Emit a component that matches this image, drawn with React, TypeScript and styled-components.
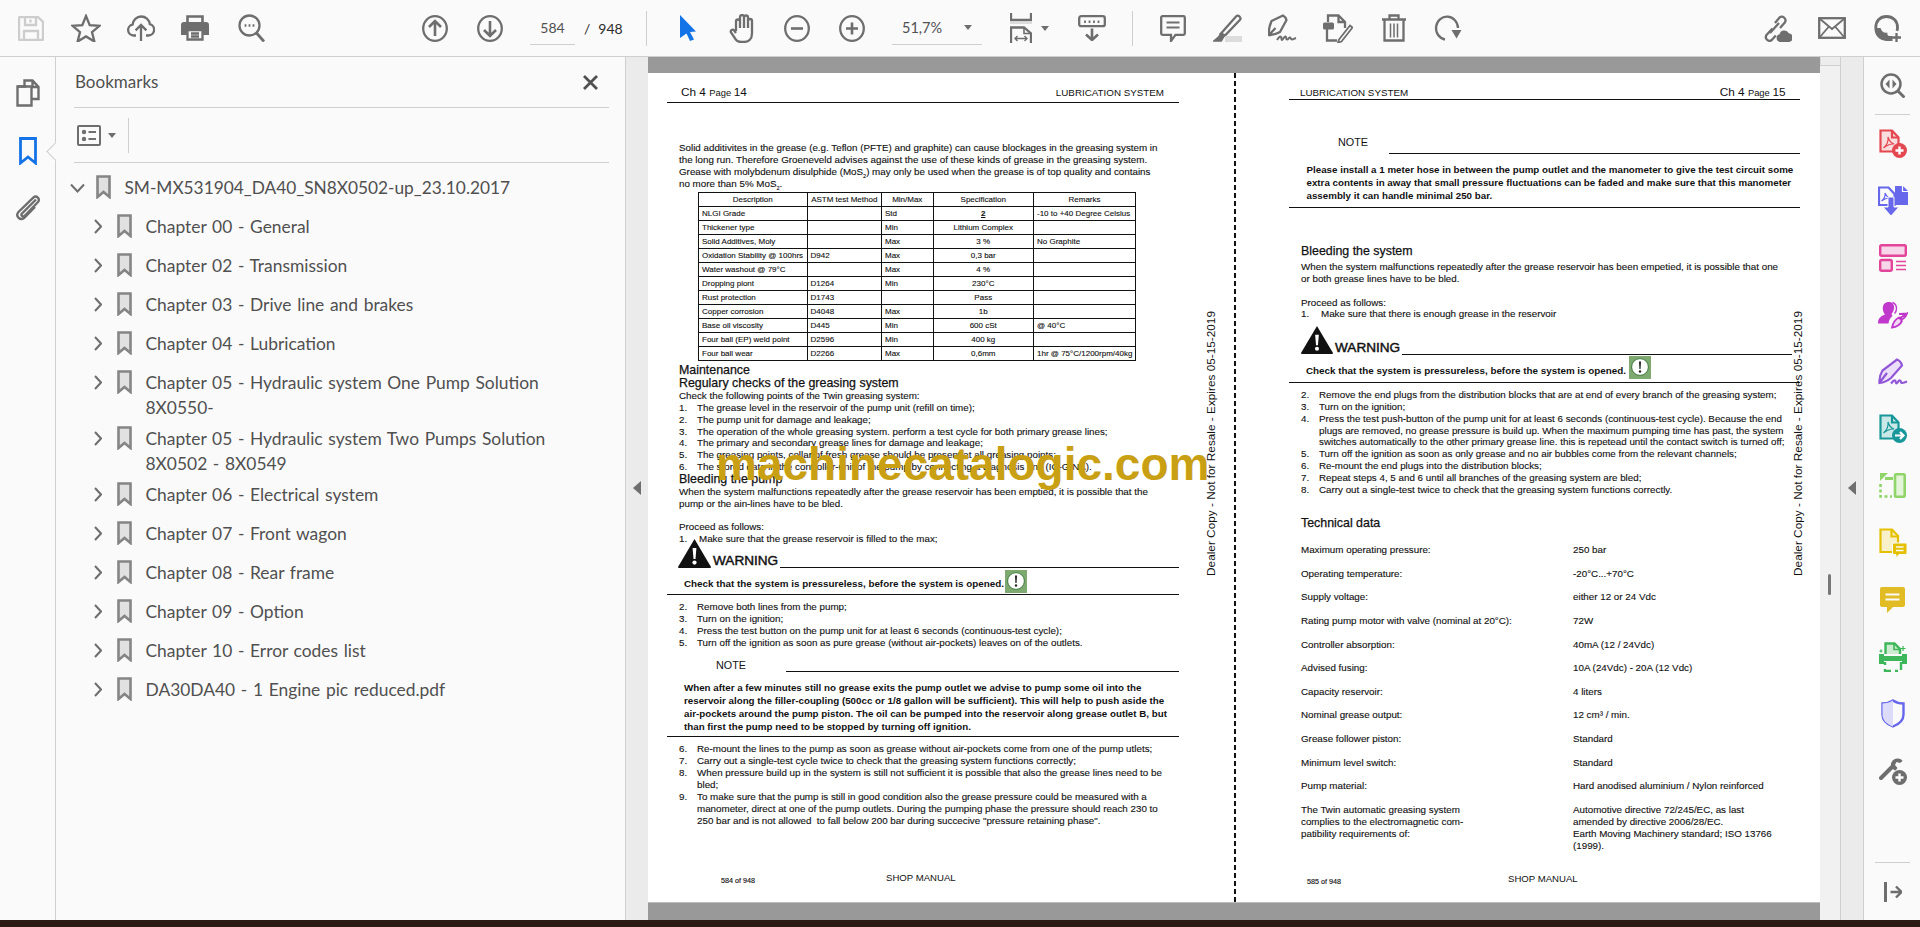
import * as React from "react"
import styled, { createGlobalStyle } from "styled-components"

const GlobalStyle = createGlobalStyle`
  html, body {
    margin: 0;
    padding: 0;
    height: 100%;
    overflow: hidden;
    background: #2b1a14;
  }
`

const ui = `Lato, "Open Sans", sans-serif`
const doc = `"Liberation Sans", Arial, sans-serif`

const Shell = styled.div`
  width: 1920px;
  height: 927px;
  display: flex;
  flex-direction: column;
  font-family: ${ui};
`

const Toolbar = styled.header`
  height: 56px;
  flex: none;
  display: flex;
  align-items: center;
  background: #fafafa;
  border-bottom: 1px solid #cfcfcf;
  padding-right: 18px;
`

const ToolIcon = styled.svg<{ $ml: number }>`
  flex: none;
  margin-left: ${(p) => p.$ml}px;
  fill: none;
  stroke: #6e6e6e;
  stroke-width: 2.3;
`

const ToolDivider = styled.div<{ $ml: number }>`
  flex: none;
  width: 1px;
  height: 35px;
  margin-left: ${(p) => p.$ml}px;
  background: #cfcfcf;
`

const PageInput = styled.div`
  flex: none;
  width: 45px;
  height: 34px;
  margin-left: 27px;
  display: flex;
  align-items: center;
  justify-content: center;
  border-bottom: 1px solid #cfcfcf;
  box-sizing: border-box;
  font-size: 14px;
  color: #505050;
`

const PageTotal = styled.div`
  flex: none;
  width: 36px;
  margin-left: 9px;
  display: flex;
  gap: 8px;
  font-size: 14px;
  color: #2c2c2c;
`

const ZoomSelect = styled.div`
  flex: none;
  width: 90px;
  height: 34px;
  margin-left: 27px;
  padding: 0 10px;
  display: flex;
  align-items: center;
  justify-content: space-between;
  border-bottom: 1px solid #cfcfcf;
  box-sizing: border-box;
  font-size: 14.5px;
  color: #505050;
`

const Caret = styled.span<{ $ml?: number }>`
  flex: none;
  margin-left: ${(p) => p.$ml ?? 0}px;
  width: 0;
  height: 0;
  border-left: 4px solid transparent;
  border-right: 4px solid transparent;
  border-top: 5px solid #6e6e6e;
`

const Spacer = styled.div`
  flex: 1;
`

const Workspace = styled.div`
  flex: 1;
  min-height: 0;
  display: flex;
`

const Desktop = styled.div`
  height: 7px;
  flex: none;
  background: #2b1a14;
`

const LeftRail = styled.nav`
  position: relative;
  flex: none;
  width: 55px;
  padding-top: 22px;
  box-sizing: content-box;
  display: flex;
  flex-direction: column;
  align-items: center;
  background: #fafafa;
  border-right: 1px solid #cfcfcf;
`

const RailPointer = styled.span`
  position: absolute;
  left: 49px;
  top: 88px;
  width: 12px;
  height: 12px;
  background: #fafafa;
  border-left: 1px solid #cfcfcf;
  border-bottom: 1px solid #cfcfcf;
  transform: rotate(45deg);
`

const LeftRailIcon = styled.svg<{ $mt?: number; $blue?: boolean }>`
  flex: none;
  margin-top: ${(p) => p.$mt ?? 0}px;
  fill: none;
  stroke: ${(p) => (p.$blue ? "#1473e6" : "#6e6e6e")};
  stroke-width: 2.4;
`

const Panel = styled.aside`
  flex: none;
  width: 569px;
  background: #fafafa;
  display: flex;
  flex-direction: column;
`

const PanelHead = styled.div`
  height: 50px;
  margin: 0 16px 0 18px;
  display: flex;
  align-items: center;
  justify-content: space-between;
  border-bottom: 1px solid #cfcfcf;
  box-sizing: content-box;
  padding-right: 11px;
  font-size: 17px;
  color: #505050;
`

const PanelTitle = styled.span`
  margin: -2px 0 0 1px;
`

const PanelTools = styled.div`
  height: 55px;
  margin: 0 16px 0 18px;
  padding-left: 3px;
  display: flex;
  align-items: center;
  border-bottom: 1px solid #cfcfcf;
  box-sizing: border-box;
`

const PanelToolsDivider = styled.div`
  width: 1px;
  height: 35px;
  margin-left: 12px;
  background: #cfcfcf;
`

const Tree = styled.div`
  padding-top: 5px;
`

const TreeRow = styled.div<{ $root?: boolean; $tall?: boolean }>`
  height: ${(p) => (p.$tall ? 56 : 39)}px;
  padding-left: ${(p) => (p.$root ? 14 : 38)}px;
  display: flex;
  align-items: flex-start;
`

const TreeChevron = styled.svg<{ $root?: boolean }>`
  flex: none;
  margin-top: ${(p) => (p.$root ? 15 : 12)}px;
  margin-right: ${(p) => (p.$root ? 11 : 15)}px;
  fill: none;
  stroke: #6e6e6e;
  stroke-width: 2;
`

const TreeMark = styled.svg`
  flex: none;
  margin-top: 7px;
  margin-right: 13.5px;
  fill: #e1e1e1;
  stroke: #858585;
  stroke-width: 2.6;
`

const TreeLabel = styled.span<{ $root?: boolean }>`
  padding-top: 7px;
  font-size: ${(p) => (p.$root ? 17.3 : 17.4)}px;
  word-spacing: ${(p) => (p.$root ? 0 : 1.2)}px;
  line-height: 25px;
  color: #505050;
  white-space: pre;
`

const Gutter = styled.div<{ $w: number; $border?: boolean }>`
  position: relative;
  flex: none;
  width: ${(p) => p.$w}px;
  background: #ebebeb;
  border-left: ${(p) => (p.$border ? "1px solid #cfcfcf" : "none")};
  box-sizing: border-box;
`

const GutterArrow = styled.span`
  position: absolute;
  top: 424px;
  left: 7px;
  width: 0;
  height: 0;
  border-top: 7px solid transparent;
  border-bottom: 7px solid transparent;
  border-right: 8px solid #6e6e6e;
`

const Viewer = styled.main`
  flex: none;
  width: 1172px;
  display: flex;
  flex-direction: column;
`

const Band = styled.div<{ $h: number; $edge?: boolean }>`
  flex: none;
  height: ${(p) => p.$h}px;
  background: #999;
  border-top: ${(p) => (p.$edge ? "1px solid #bdbdbd" : "none")};
  box-sizing: border-box;
`

const Spread = styled.div`
  flex: 1;
  min-height: 0;
  display: flex;
  background: #fff;
`

const PageLeft = styled.section`
  position: relative;
  flex: none;
  width: 586px;
  padding: 13px 55px 0 19px;
  box-sizing: border-box;
  overflow: hidden;
`

const PageRight = styled.section`
  position: relative;
  flex: none;
  width: 584.5px;
  padding: 13px 20.5px 0 53.5px;
  box-sizing: border-box;
  overflow: hidden;
`

const Fold = styled.div`
  flex: none;
  width: 1.5px;
  background: repeating-linear-gradient(to bottom, #111 0, #111 5px, transparent 5px, transparent 8px);
`

const PageHead = styled.div<{ $h: number; $pl: number; $pr: number }>`
  height: ${(p) => p.$h}px;
  padding: 0 ${(p) => p.$pr}px 0 ${(p) => p.$pl}px;
  display: flex;
  justify-content: space-between;
  align-items: baseline;
  border-bottom: 1px solid #111;
  font-family: ${doc};
  font-size: 9.8px;
  line-height: 13px;
  color: #111;
`

const ChapterNo = styled.span`
  font-size: 11.8px;
`

const ChapterSmall = styled.span`
  font-size: 9.4px;
`

const Body = styled.div<{ $mt?: number; $pl?: number; $lh?: number }>`
  margin-top: ${(p) => p.$mt ?? 0}px;
  padding-left: ${(p) => p.$pl ?? 12}px;
  font-family: ${doc};
  font-size: 9.8px;
  line-height: ${(p) => p.$lh ?? 12}px;
  color: #111;
  white-space: pre;
  -webkit-text-stroke: 0.12px #111;

  sub {
    font-size: 5.5px;
    line-height: 0;
  }
`

const Heading = styled.div<{ $mt?: number }>`
  margin-top: ${(p) => p.$mt ?? 0}px;
  padding-left: 12px;
  font-family: ${doc};
  font-size: 12.4px;
  line-height: 13px;
  color: #111;
  white-space: pre;
  -webkit-text-stroke: 0.25px #111;
`

const ListRow = styled.div<{ $indent?: number }>`
  display: flex;

  > b {
    flex: none;
    width: ${(p) => p.$indent ?? 18}px;
    font-weight: 400;
  }
`

const SpecTable = styled.table`
  margin: 2px 0 0 31px;
  width: 437px;
  table-layout: fixed;
  border-collapse: collapse;
  font-family: ${doc};
  font-size: 8px;
  color: #111;
  -webkit-text-stroke: 0.12px #111;
`

const SpecCol = styled.col<{ $w: number }>`
  width: ${(p) => p.$w}px;
`

const SpecCell = styled.td<{ $center?: boolean; $strong?: boolean }>`
  height: 14px;
  padding: 0 3px;
  border: 1px solid #111;
  box-sizing: border-box;
  line-height: 12px;
  text-align: ${(p) => (p.$center ? "center" : "left")};
  white-space: nowrap;
  font-weight: ${(p) => (p.$strong ? 700 : 400)};
  text-decoration: ${(p) => (p.$strong ? "underline" : "none")};
`

const WarningRow = styled.div<{ $mt: number; $h: number; $pb: number; $pl: number; $pr?: number }>`
  margin-top: ${(p) => p.$mt}px;
  height: ${(p) => p.$h}px;
  padding: 0 ${(p) => p.$pr ?? 0}px ${(p) => p.$pb}px ${(p) => p.$pl}px;
  box-sizing: border-box;
  display: flex;
  align-items: flex-end;
`

const WarningLabel = styled.span`
  margin-left: 2px;
  font-family: ${doc};
  font-size: 13.6px;
  line-height: 14px;
  color: #111;
  -webkit-text-stroke: 0.45px #111;
`

const LabelRule = styled.span<{ $ml: number }>`
  flex: 1;
  margin-left: ${(p) => p.$ml}px;
  border-bottom: 1px solid #111;
`

const CheckRow = styled.div<{ $mt: number; $h: number; $pb: number; $gap: number }>`
  margin-top: ${(p) => p.$mt}px;
  height: ${(p) => p.$h}px;
  padding-left: 17px;
  display: flex;
  align-items: flex-end;
  gap: ${(p) => p.$gap}px;
  border-bottom: 1px solid #111;
  font-family: ${doc};
  font-size: 9.85px;
  font-weight: 700;
  line-height: 12px;
  color: #111;

  > span {
    margin-bottom: ${(p) => p.$pb}px;
    white-space: pre;
  }

  > svg {
    align-self: flex-start;
  }
`

const NoteRow = styled.div<{ $mt: number; $h: number; $gap: number }>`
  margin-top: ${(p) => p.$mt}px;
  height: ${(p) => p.$h}px;
  padding-left: 49px;
  display: flex;
  align-items: flex-start;
  font-family: ${doc};
  font-size: 10.8px;
  line-height: 13px;
  color: #111;

  > i {
    flex: 1;
    align-self: flex-end;
    margin-left: ${(p) => p.$gap}px;
    border-bottom: 1px solid #111;
  }
`

const BoldNote = styled.div<{ $mt: number; $pl: number }>`
  margin-top: ${(p) => p.$mt}px;
  padding-left: ${(p) => p.$pl}px;
  font-family: ${doc};
  font-size: 9.77px;
  font-weight: 700;
  line-height: 13px;
  color: #111;
  white-space: pre;
`

const Rule = styled.div<{ $mt: number }>`
  margin-top: ${(p) => p.$mt}px;
  height: 1px;
  background: #111;
`

const Foot = styled.div<{ $mt: number; $pl: number; $gap: number }>`
  margin-top: ${(p) => p.$mt}px;
  padding-left: ${(p) => p.$pl}px;
  display: flex;
  gap: ${(p) => p.$gap}px;
  font-family: ${doc};
  color: #111;
`

const FootNo = styled.span`
  margin-top: 3px;
  width: 37px;
  font-size: 7.2px;
  line-height: 12px;
  white-space: nowrap;
  -webkit-text-stroke: 0.15px #111;
`

const FootTitle = styled.span`
  font-size: 9.6px;
  line-height: 12px;
  white-space: nowrap;
`

const DataGrid = styled.div`
  margin-top: 14.5px;
  padding-left: 12px;
  display: grid;
  grid-template-columns: 272px 1fr;
  row-gap: 11.64px;
  font-family: ${doc};
  font-size: 9.8px;
  line-height: 12px;
  color: #111;
  white-space: pre;
  -webkit-text-stroke: 0.12px #111;
`

const Expiry = styled.span<{ $right: number }>`
  position: absolute;
  top: 238px;
  right: ${(p) => p.$right}px;
  writing-mode: vertical-rl;
  transform: rotate(180deg);
  font-family: ${doc};
  font-size: 11.8px;
  line-height: 12px;
  color: #111;
  white-space: nowrap;
`

const Stamp = styled.span`
  position: absolute;
  left: 68px;
  top: 368px;
  font-family: ${doc};
  font-size: 46px;
  font-weight: 700;
  line-height: 46px;
  color: #c9a013;
  white-space: nowrap;
`

const Scrollbar = styled.div`
  position: relative;
  flex: none;
  width: 20px;
  background: #f1f1f1;
  border-right: 1px solid #cfcfcf;
  box-sizing: content-box;
`

const ScrollCap = styled.div`
  height: 9px;
  background: #ededed;
  border-bottom: 1px solid #cfcfcf;
  border-left: 1px solid #dcdcdc;
  box-sizing: border-box;
`

const ScrollThumb = styled.div`
  position: absolute;
  top: 517px;
  left: 8px;
  width: 3px;
  height: 21px;
  border-radius: 2px;
  background: #777;
`

const RightRail = styled.nav`
  flex: none;
  width: 57px;
  background: #fafafa;
  border-left: 1px solid #cfcfcf;
  display: flex;
  flex-direction: column;
  align-items: center;
`

const RailSlot = styled.div`
  flex: none;
  height: 57px;
  width: 100%;
  display: flex;
  align-items: center;
  justify-content: center;
`

const RailRule = styled.div`
  flex: none;
  width: 35px;
  height: 1px;
  background: #cfcfcf;
`

const RailIcon = styled.svg<{ $c: string; $sw?: number }>`
  flex: none;
  fill: none;
  stroke: ${(p) => p.$c};
  stroke-width: ${(p) => p.$sw ?? 2.2};
`

function Bookmark() {
  return (
    <TreeMark width={15} height={24} viewBox="0 0 15 24">
      <path d="M1.5 1.5h12v20.5l-6-5-6 5z" />
    </TreeMark>
  )
}

const chapters: { label: string; tall?: boolean }[] = [
  { label: "Chapter 00 - General" },
  { label: "Chapter 02 - Transmission" },
  { label: "Chapter 03 - Drive line and brakes" },
  { label: "Chapter 04 - Lubrication" },
  { label: "Chapter 05 - Hydraulic system One Pump Solution\n8X0550-", tall: true },
  { label: "Chapter 05 - Hydraulic system Two Pumps Solution\n8X0502 - 8X0549", tall: true },
  { label: "Chapter 06 - Electrical system" },
  { label: "Chapter 07 - Front wagon" },
  { label: "Chapter 08 - Rear frame" },
  { label: "Chapter 09 - Option" },
  { label: "Chapter 10 - Error codes list" },
  { label: "DA30DA40 - 1 Engine pic reduced.pdf" },
]

const specRows = [
  ["NLGI Grade", "", "Std", "2", "-10 to +40 Degree Celsius"],
  ["Thickener type", "", "Min", "Lithium Complex", ""],
  ["Solid Additives, Moly", "", "Max", "3 %", "No Graphite"],
  ["Oxidation Stability @ 100hrs", "D942", "Max", "0,3 bar", ""],
  ["Water washout @ 79°C", "", "Max", "4 %", ""],
  ["Dropping piont", "D1264", "Min", "230°C", ""],
  ["Rust protection", "D1743", "", "Pass", ""],
  ["Copper corrosion", "D4048", "Max", "1b", ""],
  ["Base oil viscosity", "D445", "Min", "600 cSt", "@ 40°C"],
  ["Four ball (EP) weld point", "D2596", "Min", "400 kg", ""],
  ["Four ball wear", "D2266", "Max", "0,6mm", "1hr @ 75°C/1200rpm/40kg"],
]

const techData = [
  ["Maximum operating pressure:", "250 bar"],
  ["Operating temperature:", "-20°C...+70°C"],
  ["Supply voltage:", "either 12 or 24 Vdc"],
  ["Rating pump motor with valve (nominal at 20°C):", "72W"],
  ["Controller absorption:", "40mA (12 / 24Vdc)"],
  ["Advised fusing:", "10A (24Vdc) - 20A (12 Vdc)"],
  ["Capacity reservoir:", "4 liters"],
  ["Nominal grease output:", "12 cm³ / min."],
  ["Grease follower piston:", "Standard"],
  ["Minimum level switch:", "Standard"],
  ["Pump material:", "Hard anodised aluminium / Nylon reinforced"],
  [
    "The Twin automatic greasing system\ncomplies to the electromagnetic com-\npatibility requirements of:",
    "Automotive directive 72/245/EC, as last\namended by directive 2006/28/EC.\nEarth Moving Machinery standard; ISO 13766\n(1999).",
  ],
]

function Steps({ items, indent }: { items: [string, string][]; indent?: number }) {
  return (
    <>
      {items.map(([no, text]) => (
        <ListRow key={no} $indent={indent}>
          <b>{no}</b>
          <span>{text}</span>
        </ListRow>
      ))}
    </>
  )
}

function Danger({ w, h }: { w: number; h: number }) {
  return (
    <svg width={w} height={h} viewBox="0 0 33 29" style={{ flex: "none" }}>
      <path d="M16.5 0 L33 28 Q33 29 32 29 H1 Q0 29 0 28 Z" fill="#111" />
      <path d="M14.6 9 h3.8 l-.9 11 h-2z" fill="#fff" />
      <circle cx="16.5" cy="23.6" r="2.1" fill="#fff" />
    </svg>
  )
}

function Caution() {
  return (
    <svg width={22} height={23} viewBox="0 0 22 23">
      <rect width="22" height="23" fill="#7ea971" />
      <circle cx="11" cy="11" r="8.4" fill="#fff" stroke="#3e7a3c" strokeWidth="1" />
      <path d="M10 5.5h2l-.4 7.5h-1.2z" fill="#222" />
      <circle cx="11" cy="15.5" r="1.2" fill="#222" />
    </svg>
  )
}

export default function App() {
  return (
    <Shell>
      <GlobalStyle />
      <Toolbar>
        <ToolIcon $ml={18} width={26} height={25} viewBox="0 0 26 25" style={{ stroke: "#cdcdcd" }}>
          <path d="M2 1h18l5 5v17a1 1 0 0 1-1 1H2a1 1 0 0 1-1-1V2a1 1 0 0 1 1-1z" />
          <path d="M7 1v8h11V1M12.5 3.5v3M6 24v-9h14v9" />
        </ToolIcon>
        <ToolIcon $ml={27} width={30} height={28} viewBox="0 0 30 28">
          <path d="M15 2l3.7 9.1 9.8.7-7.5 6.3 2.4 9.5L15 22.4l-8.4 5.2L9 18.1 1.5 11.8l9.8-.7z" />
        </ToolIcon>
        <ToolIcon $ml={26} width={28} height={26} viewBox="0 0 28 26">
          <path d="M9 20.5H6.5A5.5 5.5 0 0 1 5.6 9.6C6 5 9.6 1.5 14.2 1.5c4.4 0 8 3.3 8.6 7.6a5.8 5.8 0 0 1-1.3 11.4H19" />
          <path d="M14 26V10M8.6 15.4L14 10l5.4 5.4" />
        </ToolIcon>
        <ToolIcon $ml={26} width={28} height={26} viewBox="0 0 28 26">
          <path d="M6.5 7V1.5h15V7" strokeWidth="2.6" />
          <path d="M3 7h22a3 3 0 0 1 3 3v10h-6v-5H6v5H0V10a3 3 0 0 1 3-3z" fill="#6e6e6e" stroke="none" />
          <path d="M6.5 15h15v9.5h-15zM10 18.5h8M10 21.5h8" />
        </ToolIcon>
        <ToolIcon $ml={29} width={27} height={28} viewBox="0 0 27 28">
          <circle cx="11.5" cy="11.5" r="10" />
          <path d="M18.5 19l7.5 8.5" strokeWidth="2.8" />
          <path d="M6.6 11.5h1.8M10.6 11.5h1.8M14.6 11.5h1.8" />
        </ToolIcon>
        <ToolIcon $ml={157} width={26} height={27} viewBox="0 0 26 27">
          <ellipse cx="13" cy="13.5" rx="11.8" ry="12.3" />
          <path d="M13 21V6.5M7 12l6-6 6 6" strokeWidth="2.6" />
        </ToolIcon>
        <ToolIcon $ml={29} width={26} height={27} viewBox="0 0 26 27">
          <ellipse cx="13" cy="13.5" rx="11.8" ry="12.3" />
          <path d="M13 6v14.5M7 15l6 6 6-6" strokeWidth="2.6" />
        </ToolIcon>
        <PageInput>584</PageInput>
        <PageTotal>
          <span>/</span>
          <span>948</span>
        </PageTotal>
        <ToolDivider $ml={26} />
        <ToolIcon $ml={33} width={16} height={26} viewBox="0 0 16 26" style={{ fill: "#1473e6", stroke: "none" }}>
          <path d="M0 0l16 16.5-6 .4 4 7.5-4 1.6-3.5-7.6L0 23z" />
        </ToolIcon>
        <ToolIcon $ml={33} width={27} height={29} viewBox="0 0 27 29">
          <path d="M7 17V7.5a2 2 0 0 1 4 0V14M11 14V3a2 2 0 0 1 4 0v11M15 14V3.5a2 2 0 0 1 4 0V14M19 14V7a2 2 0 0 1 4 0v12.5c0 5.5-3.5 8.5-8.5 8.5h-2c-3.5 0-5.5-1.5-7-4.500L2 18.500c-1-2.500 1.800-3.800 3.200-2L7 19" />
        </ToolIcon>
        <ToolIcon $ml={28} width={26} height={27} viewBox="0 0 26 27">
          <ellipse cx="13" cy="13.5" rx="11.8" ry="12.3" />
          <path d="M7 13.5h12" strokeWidth="2.6" />
        </ToolIcon>
        <ToolIcon $ml={29} width={26} height={27} viewBox="0 0 26 27">
          <ellipse cx="13" cy="13.5" rx="11.8" ry="12.3" />
          <path d="M7 13.5h12M13 7.5v12" strokeWidth="2.6" />
        </ToolIcon>
        <ZoomSelect>
          <span>51,7%</span>
          <Caret />
        </ZoomSelect>
        <ToolIcon $ml={28} width={22} height={30} viewBox="0 0 22 30">
          <path d="M1 0v7h20V0" />
          <path d="M0 10h22" stroke="#dcdcdc" strokeWidth="2" />
          <path d="M1 30V14.5h13l7 6V30" />
          <path d="M14 14.5v6h7" strokeWidth="1.6" />
          <path d="M5 25.5h12M7.5 23L5 25.5 7.5 28M14.5 23l2.5 2.5-2.500 2.500" strokeWidth="1.4" />
        </ToolIcon>
        <Caret $ml={9} />
        <ToolIcon $ml={29} width={28} height={26} viewBox="0 0 28 26">
          <rect x="1.2" y="1.2" width="25.6" height="10" rx="2" />
          <path d="M7 5.5V8M11.5 5.5V8M16 5.5V8M20.5 5.5V8" strokeWidth="1.8" />
          <path d="M14 13.5V25M8 19.5l6 5.500 6-5.500" strokeWidth="2.6" />
        </ToolIcon>
        <ToolDivider $ml={26} />
        <ToolIcon $ml={27} width={26} height={27} viewBox="0 0 26 27">
          <path d="M2.5 1.2h21a1.3 1.3 0 0 1 1.3 1.3v16a1.3 1.3 0 0 1-1.3 1.3h-8L11 26v-6.2H2.5a1.3 1.3 0 0 1-1.3-1.3v-16a1.3 1.3 0 0 1 1.3-1.3z" />
          <path d="M6.5 7.5h13M6.5 12.5h13" strokeWidth="1.8" />
        </ToolIcon>
        <ToolIcon $ml={27} width={29} height={28} viewBox="0 0 29 28">
          <path d="M8 19.5L23 2.5c1-1 2.5-1 3.5 0s1.200 2.500.3 3.500L12 21.500z" />
          <path d="M8 19.5l-1.500 3L12 21.5M6.5 22.500L2 26.500h6l2.500-4z" fill="#6e6e6e" />
          <rect x="12" y="22" width="17" height="6" fill="#dcdcdc" stroke="none" />
        </ToolIcon>
        <ToolIcon $ml={26} width={29} height={28} viewBox="0 0 29 28">
          <path d="M1 21c-.5-4 .8-10 2.500-14L15 1.500c1.800 1 3 2.800 3.500 4.500L12 18c-3.500 2-7 3-11 3zM1 21l6.500-7" strokeLinejoin="round" />
          <path d="M9 26c2-3 3-4 4-3s0 3 1 3 2-4 3.500-3.500 0 3 1.500 3 2-2.500 3-2 .5 2 2 2 2.500-1 4-1.500" strokeWidth="2" />
        </ToolIcon>
        <ToolIcon $ml={26} width={30} height={29} viewBox="0 0 30 29">
          <path d="M5 8V1.500h10.500l6.500 6.500v6M15.500 1.500V8H22M4 15v11.500h10" />
          <rect x="0" y="8.5" width="11" height="7" rx="1.5" fill="#6e6e6e" stroke="none" />
          <path d="M16 25.500L27 11.500l2.500 2-11 14-3.500 1z" strokeWidth="1.8" />
        </ToolIcon>
        <ToolIcon $ml={28} width={26} height={28} viewBox="0 0 26 28">
          <path d="M1 5.500h24M8.500 5V1.500h9V5" />
          <path d="M3.500 6v20.500h19V6" />
          <path d="M9.500 9.500v14M13 9.500v14M16.500 9.500v14" strokeWidth="1.5" />
        </ToolIcon>
        <ToolIcon $ml={27} width={28} height={26} viewBox="0 0 28 26">
          <path d="M11 24.500A11 11.500 0 1 1 24 13" />
          <path d="M17.500 15h10l-5 8.500z" fill="#6e6e6e" stroke="none" />
        </ToolIcon>
        <Spacer />
        <ToolIcon $ml={0} width={30} height={28} viewBox="0 0 30 28">
          <path d="M10.500 14.500l-6 6.500a3.700 3.700 0 0 0 5.300 5l4-4.500" />
          <path d="M8 19l9-10" />
          <path d="M13 9l4.500-5.500a3.700 3.700 0 0 1 5.300 5L18 14" />
          <path d="M18 28a4 4 0 0 1-.5-7.800 5 5 0 0 1 9.300-1A4.400 4.400 0 0 1 26 28z" fill="#6e6e6e" stroke="none" />
        </ToolIcon>
        <ToolIcon $ml={26} width={28} height={22} viewBox="0 0 28 22">
          <rect x="1.2" y="1.2" width="25.6" height="19.6" />
          <path d="M1.500 1.500L14 12 26.500 1.500M1.500 20.500l9-10.500M26.500 20.500l-9-10.500" strokeWidth="1.8" />
        </ToolIcon>
        <ToolIcon $ml={28} width={28} height={27} viewBox="0 0 28 27">
          <path d="M18.500 24.500H12.500C5.500 24.500 1.800 19 1.800 12.500S6 1.500 12.500 1.500 23.500 6 23.500 12.500c0 1.200-.2 2.300-.5 3.300" strokeWidth="2.800" />
          <path d="M2 13c0 6 3.500 11.500 10.500 11.500H18v-3.500h-3c-1.500-.5-2-2-1.500-3.500-3 1-6 -1-7-4.500z" fill="#6e6e6e" stroke="none" />
          <path d="M22.500 18v9M18 22.500h9" />
        </ToolIcon>
      </Toolbar>
      <Workspace>
        <LeftRail>
          <RailPointer />
          <LeftRailIcon width={24} height={28} viewBox="0 0 24 28">
            <path d="M8.500 7.500V1.500h8l6 6.500v12h-7M16.500 1.500V8h6" />
            <path d="M1.500 7.500h14v19h-14z" />
            <path d="M1.500 7.500h9" />
          </LeftRailIcon>
          <LeftRailIcon $mt={30} $blue width={18} height={28} viewBox="0 0 18 28">
            <path d="M1.500 1.500h15v24.500L9 20l-7.500 6z" strokeWidth="2.8" />
          </LeftRailIcon>
          <LeftRailIcon $mt={29} width={25} height={27} viewBox="0 0 25 27">
            <path d="M21 5.500L7 19.500c-1.500 1.700 .5 4 2.500 2.500L23 8c2.500-3-1.500-7-4.500-4.500L3.500 18c-3.500 4 1.500 9 5.500 6L20 13" strokeWidth="2.4" />
          </LeftRailIcon>
        </LeftRail>
        <Panel>
          <PanelHead>
            <PanelTitle>Bookmarks</PanelTitle>
            <svg width={15} height={15} viewBox="0 0 15 15" fill="none" stroke="#505050" strokeWidth="2.8">
              <path d="M1 1l13 13M14 1L1 14" />
            </svg>
          </PanelHead>
          <PanelTools>
            <svg width={24} height={21} viewBox="0 0 24 21" fill="none" stroke="#6e6e6e" strokeWidth="2">
              <rect x="1" y="1" width="22" height="19" rx="1" />
              <circle cx="7" cy="7" r="2.2" fill="#6e6e6e" stroke="none" />
              <circle cx="7" cy="14" r="2.2" fill="#6e6e6e" stroke="none" />
              <path d="M11.500 7h7.500M11.500 14h7.500" />
            </svg>
            <Caret $ml={7} />
            <PanelToolsDivider />
          </PanelTools>
          <Tree>
            <TreeRow $root>
              <TreeChevron $root width={15} height={10} viewBox="0 0 15 10">
                <path d="M1 1.500l6.500 7 6.500-7" />
              </TreeChevron>
              <Bookmark />
              <TreeLabel $root>SM-MX531904_DA40_SN8X0502-up_23.10.2017</TreeLabel>
            </TreeRow>
            {chapters.map((c) => (
              <TreeRow key={c.label} $tall={c.tall}>
                <TreeChevron width={8} height={15} viewBox="0 0 8 15">
                  <path d="M1 1l6 6.500-6 6.500" />
                </TreeChevron>
                <Bookmark />
                <TreeLabel>{c.label}</TreeLabel>
              </TreeRow>
            ))}
          </Tree>
        </Panel>
        <Gutter $w={23} $border>
          <GutterArrow />
        </Gutter>
        <Viewer>
          <Band $h={16} />
          <Spread>
            <PageLeft>
              <PageHead $h={16} $pl={14} $pr={15}>
                <span>
                  <ChapterNo>Ch 4 </ChapterNo>
                  <ChapterSmall>Page </ChapterSmall>
                  <ChapterNo>14</ChapterNo>
                </span>
                <span>LUBRICATION SYSTEM</span>
              </PageHead>
              <Body $mt={39}>
                {"Solid additivites in the grease (e.g. Teflon (PFTE) and graphite) can cause blockages in the greasing system in\nthe long run. Therefore Groeneveld advises against the use of these kinds of grease in the greasing system.\nGrease with molybdenum disulphide (MoS"}
                <sub>2</sub>
                {") may only be used when the grease is of top quality and contains\nno more than 5% MoS"}
                <sub>2</sub>
                {"."}
              </Body>
              <SpecTable>
                <colgroup>
                  <SpecCol $w={108.5} />
                  <SpecCol $w={74.5} />
                  <SpecCol $w={51.5} />
                  <SpecCol $w={100.5} />
                  <SpecCol $w={102} />
                </colgroup>
                <tbody>
                  <tr>
                    <SpecCell $center>Description</SpecCell>
                    <SpecCell $center>ASTM test Method</SpecCell>
                    <SpecCell $center>Min/Max</SpecCell>
                    <SpecCell $center>Specification</SpecCell>
                    <SpecCell $center>Remarks</SpecCell>
                  </tr>
                  {specRows.map((r) => (
                    <tr key={r[0]}>
                      <SpecCell>{r[0]}</SpecCell>
                      <SpecCell>{r[1]}</SpecCell>
                      <SpecCell>{r[2]}</SpecCell>
                      <SpecCell $center $strong={r[3] === "2"}>
                        {r[3]}
                      </SpecCell>
                      <SpecCell>{r[4]}</SpecCell>
                    </tr>
                  ))}
                </tbody>
              </SpecTable>
              <Heading $mt={2.5}>Maintenance</Heading>
              <Heading>Regulary checks of the greasing system</Heading>
              <Body $mt={0.5}>Check the following points of the Twin greasing system:</Body>
              <Body $lh={11.8}>
                <Steps
                  items={[
                    ["1.", "The grease level in the reservoir of the pump unit (refill on time);"],
                    ["2.", "The pump unit for damage and leakage;"],
                    ["3.", "The operation of the whole greasing system. perform a test cycle for both primary grease lines;"],
                    ["4.", "The primary and secondary grease lines for damage and leakage;"],
                    ["5.", "The greasing points, collar of fresh grease should be present at all greasing points;"],
                    ["6.", "The stored data in the controller-unit of the pump by connecting a diagnosis unit (IC-GINA)."],
                  ]}
                />
              </Body>
              <Heading $mt={0.7}>Bleeding the pump</Heading>
              <Body $lh={11.5}>
                {"When the system malfunctions repeatedly after the grease reservoir has been emptied, it is possible that the\npump or the ain-lines have to be bled."}
              </Body>
              <Body $mt={12}>Proceed as follows:</Body>
              <Body>
                <Steps indent={20} items={[["1.", "Make sure that the grease reservoir is filled to the max;"]]} />
              </Body>
              <WarningRow $mt={0} $h={29} $pb={6} $pl={11}>
                <Danger w={33} h={29} />
                <WarningLabel>WARNING</WarningLabel>
                <LabelRule $ml={2} />
              </WarningRow>
              <CheckRow $mt={-4} $h={24} $pb={4} $gap={1}>
                <span>Check that the system is pressureless, before the system is opened.</span>
                <Caution />
              </CheckRow>
              <Body $mt={6}>
                <Steps
                  items={[
                    ["2.", "Remove both lines from the pump;"],
                    ["3.", "Turn on the ignition;"],
                    ["4.", "Press the test button on the pump unit for at least 6 seconds (continuous-test cycle);"],
                    ["5.", "Turn off the ignition as soon as pure grease (without air-pockets) leaves on of the outlets."],
                  ]}
                />
              </Body>
              <NoteRow $mt={10} $h={13} $gap={40}>
                <span>NOTE</span>
                <i />
              </NoteRow>
              <BoldNote $mt={8.5} $pl={17}>
                {"When after a few minutes still no grease exits the pump outlet we advise to pump some oil into the\nreservoir along the filler-coupling (500cc or 1/8 gallon will be sufficient). This will help to push aside the\nair-pockets around the pump piston. The oil can be pumped into the reservoir along grease outlet B, but\nthan first the pump need to be stopped by turning off ignition."}
              </BoldNote>
              <Rule $mt={3.5} />
              <Body $mt={6} $lh={11.86}>
                <Steps
                  items={[
                    ["6.", "Re-mount the lines to the pump as soon as grease without air-pockets come from one of the pump utlets;"],
                    ["7.", "Carry out a single-test cycle twice to check that the greasing system functions correctly;"],
                    ["8.", "When pressure build up in the system is still not sufficient it is possible that also the grease lines need to be\nbled;"],
                    ["9.", "To make sure that the pump is still in good condition also the grease pressure could be measured with a\nmanometer, direct at one of the pump outlets. During the pumping phase the pressure should reach 230 to\n250 bar and is not allowed  to fall below 200 bar during succecive \"pressure retaining phase\"."],
                  ]}
                />
              </Body>
              <Foot $mt={46} $pl={54} $gap={128}>
                <FootNo>584 of 948</FootNo>
                <FootTitle>SHOP MANUAL</FootTitle>
              </Foot>
              <Expiry $right={17}>Dealer Copy - Not for Resale - Expires 05-15-2019</Expiry>
              <Stamp>machinecatalogic.com</Stamp>
            </PageLeft>
            <Fold />
            <PageRight>
              <PageHead $h={13} $pl={11} $pr={14}>
                <span>LUBRICATION SYSTEM</span>
                <span>
                  <ChapterNo>Ch 4 </ChapterNo>
                  <ChapterSmall>Page </ChapterSmall>
                  <ChapterNo>15</ChapterNo>
                </span>
              </PageHead>
              <NoteRow $mt={36} $h={18} $gap={21}>
                <span>NOTE</span>
                <i />
              </NoteRow>
              <BoldNote $mt={8.5} $pl={17.5}>
                {"Please install a 1 meter hose in between the pump outlet and the manometer to give the test circuit some\nextra contents in away that small pressure fluctuations can be faded and make sure that this manometer\nassembly it can handle minimal 250 bar."}
              </BoldNote>
              <Rule $mt={5} />
              <Heading $mt={37}>Bleeding the system</Heading>
              <Body $mt={3.5}>
                {"When the system malfunctions repeatedly after the grease reservoir has been empetied, it is possible that one\nor both grease lines have to be bled."}
              </Body>
              <Body $mt={12}>Proceed as follows:</Body>
              <Body $mt={-1}>
                <Steps indent={20} items={[["1.", "Make sure that there is enough grease in the reservoir"]]} />
              </Body>
              <WarningRow $mt={13} $h={30} $pb={8} $pl={12} $pr={8}>
                <Danger w={32} h={30} />
                <WarningLabel>WARNING</WarningLabel>
                <LabelRule $ml={2} />
              </WarningRow>
              <CheckRow $mt={-7} $h={26} $pb={5} $gap={3}>
                <span>Check that the system is pressureless, before the system is opened.</span>
                <Caution />
              </CheckRow>
              <Body $mt={6} $lh={11.85}>
                <Steps
                  items={[
                    ["2.", "Remove the end plugs from the distribution blocks that are at end of every branch of the greasing system;"],
                    ["3.", "Turn on the ignition;"],
                    ["4.", "Press the test push-button of the pump unit for at least 6 seconds (continuous-test cycle). Because the end\nplugs are removed, no grease pressure is build up. When the maximum pumping time has past, the system\nswitches automatically to the other primary grease line. this is repetead until the contact switch is turned off;"],
                    ["5.", "Turn off the ignition as soon as only grease and no air bubbles come from the relevant channels;"],
                    ["6.", "Re-mount the end plugs into the distribution blocks;"],
                    ["7.", "Repeat steps 4, 5 and 6 until all branches of the greasing system are bled;"],
                    ["8.", "Carry out a single-test twice to check that the greasing system functions correctly."],
                  ]}
                />
              </Body>
              <Heading $mt={21}>Technical data</Heading>
              <DataGrid>
                {techData.map(([k, v]) => (
                  <React.Fragment key={k}>
                    <span>{k}</span>
                    <span>{v}</span>
                  </React.Fragment>
                ))}
              </DataGrid>
              <Foot $mt={21} $pl={18} $gap={164}>
                <FootNo>585 of 948</FootNo>
                <FootTitle>SHOP MANUAL</FootTitle>
              </Foot>
              <Expiry $right={16}>Dealer Copy - Not for Resale - Expires 05-15-2019</Expiry>
            </PageRight>
          </Spread>
          <Band $h={18} $edge />
        </Viewer>
        <Scrollbar>
          <ScrollCap />
          <ScrollThumb />
        </Scrollbar>
        <Gutter $w={22}>
          <GutterArrow />
        </Gutter>
        <RightRail>
          <RailSlot>
            <RailIcon $c="#6e6e6e" $sw={2.5} width={25} height={25} viewBox="0 0 25 25">
              <circle cx="11" cy="11" r="9.5" />
              <path d="M18 18l6.500 6.500" strokeWidth="3" />
              <path d="M9.500 6.500v9L5.500 11zM12.500 6.500v9l4-4.500z" fill="#6e6e6e" stroke="none" />
            </RailIcon>
          </RailSlot>
          <RailRule />
          <RailSlot>
            <RailIcon $c="#e34850" width={28} height={29} viewBox="0 0 28 29">
              <path d="M1.500 1.500h11.500l6.500 7v14h-18z" fill="#f9dcdd" />
              <path d="M13 1.500v7h6.500" />
              <path d="M4.500 19c3-2.500 5-7 4.500-11 1 3.500 3 6 6 7-3.500-.2-7.500 1.500-10.500 4z" strokeWidth="1.2" fill="none" />
              <circle cx="20.5" cy="21.5" r="7.5" fill="#e34850" stroke="none" />
              <path d="M20.500 17.500v8M16.500 21.500h8" stroke="#fff" strokeWidth="2.4" />
            </RailIcon>
          </RailSlot>
          <RailSlot>
            <RailIcon $c="#6767ec" width={30} height={30} viewBox="0 0 30 30">
              <path d="M17 0h8l5 5v14H17z" fill="#6767ec" stroke="none" />
              <path d="M24.500 0v5.500H30" stroke="#fff" strokeWidth="1.2" />
              <path d="M1 1.500h9.500l6 6.500v11H1z" fill="#fafafa" />
              <path d="M3.500 15c2.500-2 4-5 3.500-8 1 2.500 2 4 4.500 5-2.500 0-5.500 1-8 3z" strokeWidth="1.1" />
              <path d="M10 11h6v10h5l-8 9-8-9h5z" fill="#6767ec" stroke="#fafafa" strokeWidth="1" />
            </RailIcon>
          </RailSlot>
          <RailSlot>
            <RailIcon $c="#e2459a" $sw={2.4} width={28} height={28} viewBox="0 0 28 28">
              <rect x="1.2" y="1.2" width="25.6" height="10.6" rx="1.5" fill="#f6d6e8" />
              <rect x="1.2" y="16" width="11.6" height="10.8" rx="1.5" fill="#f6d6e8" />
              <path d="M17 17.500h10M17 21.500h10M17 25.500h10" strokeWidth="1.6" />
            </RailIcon>
          </RailSlot>
          <RailSlot>
            <RailIcon $c="#c038cc" width={30} height={28} viewBox="0 0 30 28">
              <path d="M11 1c3.500 0 5.500 2.500 5 6.500-.3 2.500-1.500 4.500-2.500 5.500l1 2c-2 1.500-3.500 4-4 7.500H0c0-5 2-7 7-9-1-1.200-2-3-2.200-5.500C4.500 3.500 7 1 11 1z" fill="#c038cc" stroke="none" />
              <path d="M14.500 1.500c2.500 1 4 3 4 6 0 2-1 4-2 5" strokeWidth="1.4" />
              <path d="M29 12.500c-1 3-2.500 5-6 6.500l-2-2.500c-4 2-6 5-7 10 5-.5 8-2.500 10-6.500l-1-3.500zM21 13c3 0 5.500-.5 8-.5" fill="#f4d7f6" strokeWidth="1.8" />
            </RailIcon>
          </RailSlot>
          <RailSlot>
            <RailIcon $c="#9256d9" width={30} height={28} viewBox="0 0 30 28">
              <path d="M1.500 25c-.5-5 .8-9 3-12.500L19 1.500c2 .8 4.500 3.500 5 6L13 20c-3.500 3-7 4.500-11.500 5zM2 24l7-9" fill="#ecdff9" />
              <path d="M13 25.500c2-2.500 3-3.500 4-3s.5 3 1.500 3 2-3.500 3.500-3 .5 2.500 2 2.500 3.500-1 5-1.500" strokeWidth="2.2" />
            </RailIcon>
          </RailSlot>
          <RailSlot>
            <RailIcon $c="#18979a" width={28} height={29} viewBox="0 0 28 29">
              <path d="M1.500 1.500h11.500l6.500 7v16h-18z" fill="#cbe8e8" />
              <path d="M13 1.500v7h6.500" />
              <path d="M4.500 19c3-2.500 5-7 4.500-11 1 3.500 3 6 6 7-3.500-.2-7.500 1.500-10.500 4z" strokeWidth="1.2" />
              <circle cx="20.5" cy="21.5" r="7.5" fill="#18979a" stroke="none" />
              <path d="M16 21.500h8M21 18l3.500 3.500L21 25" stroke="#fff" strokeWidth="2.2" />
            </RailIcon>
          </RailSlot>
          <RailSlot>
            <RailIcon $c="#8fd56a" $sw={2.6} width={27} height={25} viewBox="0 0 27 25">
              <rect x="16" y="1.3" width="9.700" height="22.400" rx="1" fill="#e3f4d8" />
              <path d="M1.500 11v12.500H13M1.500 9h0" strokeDasharray="3 2.500" />
              <path d="M14 5.500H6" strokeWidth="3" />
              <path d="M1 0l8 0-8 8z" fill="#8fd56a" stroke="none" />
            </RailIcon>
          </RailSlot>
          <RailSlot>
            <RailIcon $c="#e5c000" width={28} height={30} viewBox="0 0 28 30">
              <path d="M1.500 1.500h11.500l6 6.500v16h-17.500z" fill="#f8f0c8" />
              <path d="M12.500 1.500v7h7" />
              <path d="M15 15h11.500a1.500 1.500 0 0 1 1.500 1.500V25a1.500 1.500 0 0 1-1.500 1.500H20l-3 3.500v-3.500h-2a1.500 1.500 0 0 1-1.500-1.500v-8.500A1.500 1.500 0 0 1 15 15z" fill="#e5c000" stroke="#fafafa" strokeWidth="1" />
              <path d="M17 19h7.500M17 22.500h7.500" stroke="#fafafa" strokeWidth="1.4" />
            </RailIcon>
          </RailSlot>
          <RailSlot>
            <RailIcon $c="#e2bc24" width={25} height={26} viewBox="0 0 25 26">
              <path d="M2 0h21a2 2 0 0 1 2 2v16a2 2 0 0 1-2 2H13l-6 6v-6H2a2 2 0 0 1-2-2V2a2 2 0 0 1 2-2z" fill="#e2bc24" stroke="none" />
              <path d="M5.500 7.500h14M5.500 12.500h14" stroke="#fafafa" strokeWidth="2" />
            </RailIcon>
          </RailSlot>
          <RailSlot>
            <RailIcon $c="#3db75a" $sw={2.4} width={28} height={30} viewBox="0 0 28 30">
              <path d="M6.500 12V1.500h9l5.500 5.500v5" fill="#cdeccf" />
              <path d="M15 1.500V7.500h6" strokeWidth="1.6" />
              <path d="M0 12h5v2h18v-2h5v10h-5v-3H5v3H0z" fill="#3db75a" stroke="none" />
              <path d="M6 20v9h16v-9" strokeDasharray="3 4 8 4" />
              <path d="M24 4v5M21.500 6.500h5M2 7.500v3M.5 9h3" strokeWidth="1.2" />
            </RailIcon>
          </RailSlot>
          <RailSlot>
            <RailIcon $c="#6767ec" width={24} height={29} viewBox="0 0 24 29">
              <path d="M12 1.500c3 2 6.500 3 10.500 3v11c0 5.500-4 9.500-10.500 12-6.500-2.500-10.500-6.500-10.500-12v-11c4 0 7.500-1 10.500-3z" strokeWidth="2.4" />
              <path d="M12 1.500v26c-6.500-2.500-10.500-6.500-10.500-12v-11c4 0 7.500-1 10.500-3z" fill="#dcdcfa" stroke="none" />
            </RailIcon>
          </RailSlot>
          <RailSlot>
            <RailIcon $c="#6e6e6e" $sw={3} width={28} height={28} viewBox="0 0 28 28">
              <path d="M2 21L13 10" strokeWidth="4" strokeLinecap="round" />
              <path d="M19 1.500a6.500 6.500 0 0 0-7 7.500c.3 2 2 4 4.500 4.500l2-2.500-2.500-3 1.500-3 3.500 1 2.500-2c-.5-1.500-2.500-2.500-4.500-2.500z" fill="#6e6e6e" stroke="none" />
              <circle cx="20.5" cy="20.5" r="7.5" fill="#6e6e6e" stroke="none" />
              <path d="M20.500 16.500v8M16.500 20.500h8" stroke="#fff" strokeWidth="2.4" />
            </RailIcon>
          </RailSlot>
          <Spacer />
          <RailRule />
          <RailSlot>
            <RailIcon $c="#6e6e6e" $sw={2.4} width={18} height={20} viewBox="0 0 18 20">
              <path d="M1.500 0v20" strokeWidth="3" />
              <path d="M6.500 10h10.500M12 4.500l5.500 5.500-5.500 5.500" />
            </RailIcon>
          </RailSlot>
        </RightRail>
      </Workspace>
      <Desktop />
    </Shell>
  )
}
